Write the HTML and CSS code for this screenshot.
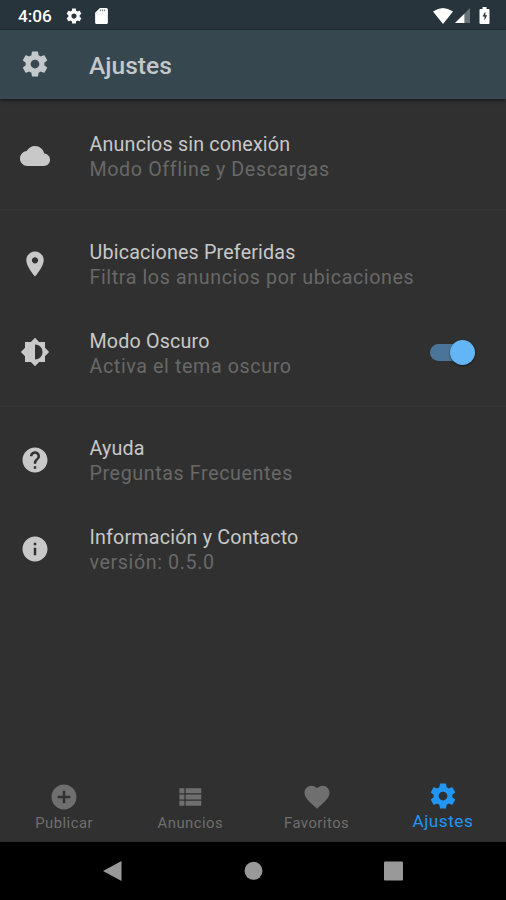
FILE: index.html
```html
<!DOCTYPE html>
<html lang="es">
<head>
    <meta charset="UTF-8">
    <meta name="viewport" content="width=device-width, initial-scale=1.0">
    <title>Ajustes</title>
    <link rel="stylesheet" href="styles.css">
</head>
<body>
    <svg class="sprite">
        <symbol id="gear" viewBox="0 0 24 24">
            <path d="M19.43 12.98c.04-.32.07-.64.07-.98s-.03-.66-.07-.98l2.11-1.65c.19-.15.24-.42.12-.64l-2-3.46c-.12-.22-.39-.3-.61-.22l-2.49 1c-.52-.4-1.08-.73-1.69-.98l-.38-2.65C14.46 2.18 14.25 2 14 2h-4c-.25 0-.46.18-.49.42l-.38 2.65c-.61.25-1.17.59-1.69.98l-2.49-1c-.23-.09-.49 0-.61.22l-2 3.46c-.13.22-.07.49.12.64l2.11 1.65c-.04.32-.07.65-.07.98s.03.66.07.98l-2.11 1.65c-.19.15-.24.42-.12.64l2 3.46c.12.22.39.3.61.22l2.49-1c.52.4 1.08.73 1.69.98l.38 2.65c.03.24.24.42.49.42h4c.25 0 .46-.18.49-.42l.38-2.65c.61-.25 1.17-.59 1.69-.98l2.49 1c.23.09.49 0 .61-.22l2-3.46c.12-.22.07-.49-.12-.64l-2.11-1.65zM12 15.5c-1.93 0-3.5-1.57-3.5-3.5s1.57-3.5 3.5-3.5 3.5 1.57 3.5 3.5-1.57 3.5-3.5 3.5z"/>
        </symbol>
    </svg>

    <div class="statusbar">
        <span class="clock">4:06</span>
        <svg class="status-gear"><use href="#gear"/></svg>
        <svg class="status-sd" viewBox="4 2 16 20"><path d="M18 2h-8L4.02 8 4 20c0 1.1.9 2 2 2h12c1.1 0 2-.9 2-2V4c0-1.1-.9-2-2-2z"/><path class="notch" opacity=".6" d="M10 4h1.500v2H10zM12.500 4H14v2h-1.500zM15 4h1.500v2H15z"/></svg>
        <div class="status-right">
            <svg class="wifi" viewBox="0 0 20 16"><path d="M0 3.500Q10-3.500 20 3.500L10 16z"/></svg>
            <svg class="signal" viewBox="0 0 16 16"><path opacity=".3" d="M16 0v16H0z"/><path d="M10 6v10H0z"/></svg>
            <svg class="battery" viewBox="0 0 10 17"><path d="M3 0h4v2h2q1 0 1 1v13q0 1-1 1H1q-1 0-1-1V3q0-1 1-1h2z"/><path class="bolt" d="M5.800 4.500L3 9.500h2v4l2.600-5.200H5.800z"/></svg>
        </div>
    </div>

    <header class="appbar">
        <svg class="icon"><use href="#gear"/></svg>
        <h1>Ajustes</h1>
    </header>

    <main class="settings">
        <div class="row">
            <svg class="icon" viewBox="0 0 24 24"><path d="M19.350 10.040C18.670 6.590 15.640 4 12 4 9.110 4 6.600 5.640 5.350 8.040 2.340 8.360 0 10.910 0 14c0 3.310 2.690 6 6 6h13c2.760 0 5-2.240 5-5 0-2.640-2.050-4.780-4.650-4.960z"/></svg>
            <div class="text">
                <div class="title">Anuncios sin conexión</div>
                <div class="subtitle">Modo Offline y Descargas</div>
            </div>
        </div>
        <hr>
        <div class="row">
            <svg class="icon" viewBox="0 0 24 24"><path d="M12 2C8.130 2 5 5.130 5 9c0 5.250 7 13 7 13s7-7.750 7-13c0-3.870-3.130-7-7-7zm0 9.500c-1.380 0-2.500-1.120-2.500-2.500s1.120-2.500 2.500-2.500 2.500 1.120 2.500 2.500-1.120 2.500-2.500 2.500z"/></svg>
            <div class="text">
                <div class="title">Ubicaciones Preferidas</div>
                <div class="subtitle">Filtra los anuncios por ubicaciones</div>
            </div>
        </div>
        <div class="row">
            <svg class="icon" viewBox="0 0 24 24"><path d="M20 15.310L23.310 12 20 8.690V4h-4.690L12 .69 8.690 4H4v4.690L.69 12 4 15.310V20h4.690L12 23.310 15.310 20H20v-4.690zM12 18V6c3.310 0 6 2.690 6 6s-2.690 6-6 6z"/></svg>
            <div class="text">
                <div class="title">Modo Oscuro</div>
                <div class="subtitle">Activa el tema oscuro</div>
            </div>
            <div class="switch"><div class="thumb"></div></div>
        </div>
        <hr>
        <div class="row">
            <svg class="icon" viewBox="0 0 24 24"><path d="M12 2C6.480 2 2 6.480 2 12s4.480 10 10 10 10-4.480 10-10S17.520 2 12 2zm1 17h-2v-2h2v2zm2.070-7.750l-.9.920C13.450 12.900 13 13.500 13 15h-2v-.5c0-1.100.45-2.100 1.170-2.830l1.240-1.260c.37-.36.59-.86.59-1.410 0-1.100-.9-2-2-2s-2 .9-2 2H8c0-2.210 1.790-4 4-4s4 1.790 4 4c0 .88-.36 1.680-.93 2.250z"/></svg>
            <div class="text">
                <div class="title">Ayuda</div>
                <div class="subtitle">Preguntas Frecuentes</div>
            </div>
        </div>
        <div class="row">
            <svg class="icon" viewBox="0 0 24 24"><path d="M12 2C6.480 2 2 6.480 2 12s4.480 10 10 10 10-4.480 10-10S17.520 2 12 2zm1 15h-2v-6h2v6zm0-8h-2V7h2v2z"/></svg>
            <div class="text">
                <div class="title">Información y Contacto</div>
                <div class="subtitle">versión: 0.5.0</div>
            </div>
        </div>
    </main>

    <nav class="tabs">
        <div class="tab">
            <svg class="icon" viewBox="0 0 24 24"><path d="M12 2C6.480 2 2 6.480 2 12s4.480 10 10 10 10-4.480 10-10S17.520 2 12 2zm5 11h-4v4h-2v-4H7v-2h4V7h2v4h4v2z"/></svg>
            <span>Publicar</span>
        </div>
        <div class="tab">
            <svg class="icon" viewBox="0 0 24 24"><path d="M3.500 9h4V5h-4zm0 5h4v-4h-4zm5 0h12.500v-4H8.500zm0-5h12.500V5H8.500zM3.500 19h4v-4h-4zm5 0h12.500v-4H8.500z"/></svg>
            <span>Anuncios</span>
        </div>
        <div class="tab">
            <svg class="icon" viewBox="0 0 24 24"><path d="M12 21.350l-1.450-1.320C5.400 15.360 2 12.280 2 8.500 2 5.420 4.420 3 7.500 3c1.740 0 3.410.81 4.500 2.090C13.090 3.810 14.760 3 16.500 3 19.580 3 22 5.420 22 8.500c0 3.780-3.400 6.860-8.550 11.540L12 21.350z"/></svg>
            <span>Favoritos</span>
        </div>
        <div class="tab active">
            <svg class="icon"><use href="#gear"/></svg>
            <span>Ajustes</span>
        </div>
    </nav>

    <div class="navbar">
        <svg viewBox="0 0 20 20"><path d="M18.500 0v20L0 10z"/></svg>
        <svg viewBox="0 0 20 20"><circle cx="10.500" cy="9.800" r="9"/></svg>
        <svg viewBox="0 0 20 20"><rect x="1" y=".5" width="19" height="19" rx="1"/></svg>
    </div>
</body>
</html>
```
FILE: styles.css
```css
body {
    margin: 0;
    height: 900px;
    overflow: hidden;
    background: #303030;
    font-family: Roboto, sans-serif;
    display: flex;
    flex-direction: column;
}

svg {
    display: block;
    flex: none;
    fill: currentColor;
}

.sprite {
    display: none;
}

.icon {
    width: 30px;
    height: 30px;
}

.statusbar {
    height: 29.5px;
    padding: 2px 16px 0 18px;
    box-sizing: border-box;
    display: flex;
    align-items: center;
    flex: none;
    background: #27343b;
    color: #fff;
}

.clock {
    width: 34px;
    font-size: 17.2px;
    font-weight: 500;
}

.status-gear {
    width: 18px;
    height: 18px;
    margin-left: 13px;
}

.status-sd {
    width: 13px;
    height: 16px;
    margin-left: 12px;
}

.notch,
.bolt {
    fill: #27343b;
}

.status-right {
    margin-left: auto;
    display: flex;
    align-items: center;
}

.wifi {
    width: 20px;
    height: 16px;
}

.signal {
    width: 15px;
    height: 15px;
    margin: 0 9px 0 2px;
}

.battery {
    width: 11px;
    height: 17px;
}

.appbar {
    height: 69px;
    padding-left: 20px;
    display: flex;
    align-items: center;
    flex: none;
    background: #37474f;
    color: #c3c8cb;
    box-shadow: 0 1px 4px rgba(0, 0, 0, 0.6);
}

.appbar h1 {
    margin: 2px 0 0 39px;
    font-size: 24.6px;
    font-weight: 500;
}

.settings {
    flex: 1;
    padding-top: 13.2px;
}

.row {
    height: 88.5px;
    padding: 0 30px 0 20px;
    display: flex;
    align-items: center;
    color: #c8c8c8;
}

.text {
    margin-left: 39.5px;
    padding-top: 2.6px;
}

.title {
    font-size: 19.7px;
    line-height: 25px;
    letter-spacing: 0.18px;
}

.subtitle {
    font-size: 19.7px;
    line-height: 25px;
    letter-spacing: 0.6px;
    color: #686868;
}

hr {
    height: 2px;
    margin: 8.7px 0;
    border: 0;
    background: #343434;
}

.switch {
    width: 41px;
    height: 17px;
    margin-left: auto;
    margin-right: 5px;
    border-radius: 9px;
    background: #4a7598;
    display: flex;
    align-items: center;
    justify-content: flex-end;
}

.thumb {
    width: 25px;
    height: 25px;
    flex: none;
    margin-right: -4px;
    border-radius: 50%;
    background: #64b5f6;
    box-shadow: 0 1px 2px rgba(0, 0, 0, 0.5);
}

.tabs {
    height: 69px;
    padding-left: 1px;
    display: flex;
    flex: none;
}

.tab {
    flex: 1;
    padding-top: 9px;
    display: flex;
    flex-direction: column;
    align-items: center;
    color: #6f6f6f;
    font-size: 14.8px;
    line-height: 20px;
    letter-spacing: 0.5px;
}

.tab span {
    margin-top: 1.5px;
}

.active {
    padding-top: 8px;
    color: #2196f3;
    font-size: 17.2px;
}

.active span {
    margin-top: 0;
}

.navbar {
    height: 58.5px;
    padding: 0 103px;
    display: flex;
    align-items: center;
    justify-content: space-between;
    flex: none;
    background: #000;
    color: #999;
}

.navbar svg {
    width: 20px;
    height: 20px;
}
```
